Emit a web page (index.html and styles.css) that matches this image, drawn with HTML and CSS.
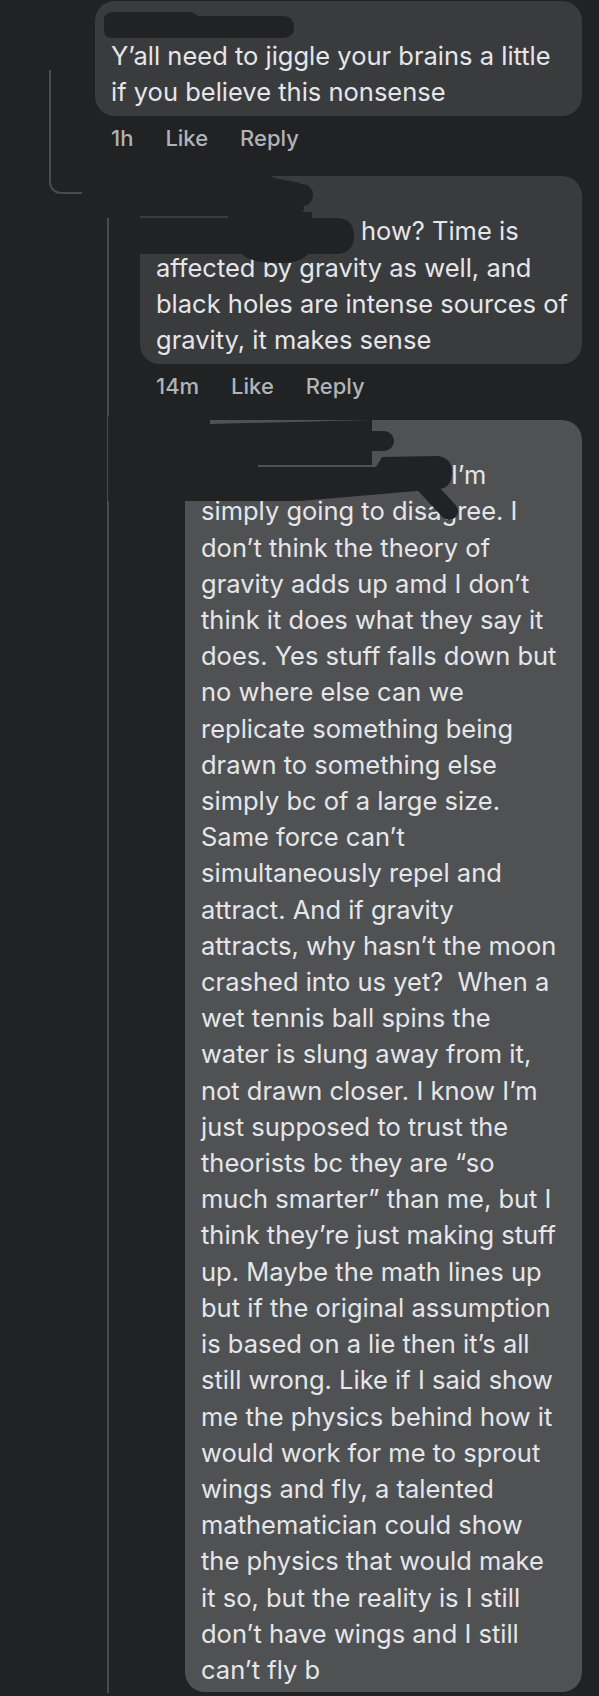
FILE: index.html
```html
<!DOCTYPE html>
<html lang="en">
<head>
    <meta charset="UTF-8">
    <meta name="viewport" content="width=device-width, initial-scale=1.0">
    <title>Comments</title>
    <link rel="stylesheet" href="styles.css">
</head>
<body>
    <div class="thread">
        <!-- top comment -->
        <div class="comment c1">
            <div class="bubble">
                <div class="author"></div>
                <p class="text">Y’all need to jiggle your brains a little<br>if you believe this nonsense</p>
            </div>
            <div class="meta"><span>1h</span><span>Like</span><span>Reply</span></div>

            <div class="replies">
                <div class="comment c2">
                    <div class="bubble">
                        <div class="author"></div>
                        <p class="text"><span class="mention m2"></span>how? Time is<br>affected by gravity as well, and<br>black holes are intense sources of<br>gravity, it makes sense</p>
                    </div>
                    <div class="meta"><span>14m</span><span>Like</span><span>Reply</span></div>

                    <div class="replies">
                        <div class="comment c3">
                            <div class="bubble hl">
                                <div class="author"></div>
                                <p class="text"><span class="mention m3"></span>I’m<br>simply going to disagree. I<br>don’t think the theory of<br>gravity adds up amd I don’t<br>think it does what they say it<br>does. Yes stuff falls down but<br>no where else can we<br>replicate something being<br>drawn to something else<br>simply bc of a large size.<br>Same force can’t<br>simultaneously repel and<br>attract. And if gravity<br>attracts, why hasn’t the moon<br>crashed into us yet?&nbsp; When a<br>wet tennis ball spins the<br>water is slung away from it,<br>not drawn closer. I know I’m<br>just supposed to trust the<br>theorists bc they are “so<br>much smarter” than me, but I<br>think they’re just making stuff<br>up. Maybe the math lines up<br>but if the original assumption<br>is based on a lie then it’s all<br>still wrong. Like if I said show<br>me the physics behind how it<br>would work for me to sprout<br>wings and fly, a talented<br>mathematician could show<br>the physics that would make<br>it so, but the reality is I still<br>don’t have wings and I still<br>can’t fly b</p>
                            </div>
                        </div>
                    </div>
                </div>
            </div>
        </div>
    </div>

    <!-- names scribbled out -->
    <svg class="redact" width="599" height="1696" viewBox="0 0 599 1696">
        <g fill="#212223" stroke="#212223" stroke-linecap="round" stroke-linejoin="round">
            <path stroke-width="0" d="M104 20 Q104 12 114 12 L188 12 Q194 12 198 16 L284 16 Q294 17 294 27 Q294 38 282 38 L112 38 Q104 38 104 30 Z"/>

            <path stroke-width="0" d="M134 176 L254 176 Q264 170 274 178 L300 183 L300 216 L134 216 Z"/>
            <line x1="296" y1="195" x2="302" y2="195" stroke-width="22"/>
            <line x1="296" y1="208" x2="298" y2="208" stroke-width="12"/>
            <path stroke-width="0" d="M228 212 L312 212 L312 220 L228 220 Z"/>
            <path stroke-width="0" d="M134 218 L336 218 Q354 218 354 236 Q354 252 338 254 L308 254 Q300 264 276 263 Q248 262 242 254 L134 254 Z"/>

            <path stroke-width="0" d="M108 416 L210 416 L210 424 L372 420 L372 465 L258 465 L258 501 L108 501 Z"/>
            <line x1="372" y1="441" x2="384" y2="441" stroke-width="20"/>
            <path stroke-width="0" d="M250 467 L376 467 L382 457 L438 456 Q452 458 452 472 Q452 487 440 489 L300 501 L250 501 Z"/>
            <line x1="424" y1="484" x2="449" y2="511" stroke-width="18"/>
        </g>
    </svg>
</body>
</html>
```

FILE: styles.css
```css
html {
    overflow: hidden;
}
body {
    margin: 0;
    height: 1696px;
    overflow: hidden;
    position: relative;
    background: #212223;
    color: #e4e6eb;
    font-family: Inter, "Liberation Sans", sans-serif;
}
.thread {
    padding: 1px 17px 0 95px;
}
.comment {
    position: relative;
}
.bubble {
    background: #3a3b3c;
    border-radius: 20px;
    padding: 9px 8px 6px 16px;
}
.bubble.hl {
    background: #505152;
    padding-bottom: 4px;
}
.author {
    height: 28px;
}
.text {
    margin: 0;
    font-size: 25.5px;
    line-height: 36.2px;
    white-space: nowrap;
}
.mention {
    display: inline-block;
}
.m2 {
    width: 205px;
}
.m3 {
    width: 250px;
}
.meta {
    display: flex;
    gap: 32px;
    margin-top: 7px;
    padding-left: 16px;
    height: 30px;
    line-height: 30px;
    font-size: 22px;
    font-weight: 500;
    color: #b0b3b8;
}
.replies {
    margin-left: 45px;
}
.c2 {
    margin-top: 23px;
}
.c3 {
    margin-top: 19px;
}

/* thread connectors */
.c2::before {
    content: "";
    position: absolute;
    left: -91px;
    top: -106px;
    width: 33px;
    height: 124px;
    box-sizing: border-box;
    border-left: 2px solid #4a4b4d;
    border-bottom: 2px solid #4a4b4d;
    border-bottom-left-radius: 12px;
}
.c2::after {
    content: "";
    position: absolute;
    left: -33px;
    top: 42px;
    height: 1475px;
    border-left: 2px solid #4a4b4d;
}
.c3::before {
    content: "";
    position: absolute;
    left: -78px;
    top: 3px;
    width: 21px;
    height: 17px;
    box-sizing: border-box;
    border-left: 2px solid #4a4b4d;
    border-bottom: 2px solid #4a4b4d;
    border-bottom-left-radius: 12px;
}

.redact {
    position: absolute;
    top: 0;
    left: 0;
    pointer-events: none;
}
```
